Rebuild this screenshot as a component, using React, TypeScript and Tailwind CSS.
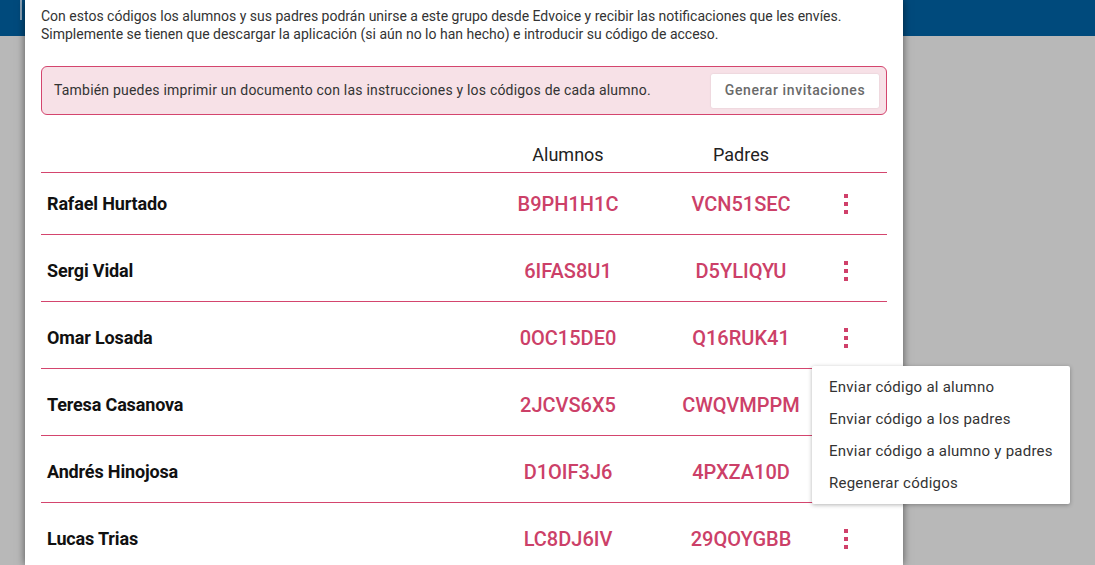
const students = [
  { name: "Rafael Hurtado", alumno: "B9PH1H1C", padres: "VCN51SEC" },
  { name: "Sergi Vidal", alumno: "6IFAS8U1", padres: "D5YLIQYU" },
  { name: "Omar Losada", alumno: "0OC15DE0", padres: "Q16RUK41" },
  { name: "Teresa Casanova", alumno: "2JCVS6X5", padres: "CWQVMPPM" },
  { name: "Andrés Hinojosa", alumno: "D1OIF3J6", padres: "4PXZA10D" },
  { name: "Lucas Trias", alumno: "LC8DJ6IV", padres: "29QOYGBB" },
];

const menuItems = [
  "Enviar código al alumno",
  "Enviar código a los padres",
  "Enviar código a alumno y padres",
  "Regenerar códigos",
];

function Dots() {
  return (
    <div className="flex flex-col items-center gap-[4px]">
      <span className="block w-[4px] h-[4px] bg-[#d0406a]" />
      <span className="block w-[4px] h-[4px] bg-[#d0406a]" />
      <span className="block w-[4px] h-[4px] bg-[#d0406a]" />
    </div>
  );
}

export default function App() {
  return (
    <div
      className="relative w-[1095px] h-[565px] overflow-hidden bg-[#b8b8b8] flex"
      style={{ fontFamily: "Roboto, 'Liberation Sans', sans-serif" }}
    >
      {/* left strip */}
      <div className="w-[25px] flex-shrink-0 flex flex-col">
        <div className="h-[36px] bg-[#004a7c]">
          <div className="ml-[20px] w-[2px] h-[20px] bg-[#8ea6ba]" />
        </div>
        <div className="flex-1 bg-[#b8b8b8]" />
      </div>

      {/* modal panel */}
      <div className="relative z-10 w-[878px] flex-shrink-0 bg-white shadow-[0_0_8px_rgba(0,0,0,0.55)] px-[16px] pt-[7px]">
        <p className="text-[14px] leading-[18px] text-[#333]">
          Con estos códigos los alumnos y sus padres podrán unirse a este grupo desde Edvoice y recibir las notificaciones que les envíes.
          <br />
          Simplemente se tienen que descargar la aplicación (si aún no lo han hecho) e introducir su código de acceso.
        </p>

        <div className="mt-[23px] h-[49px] flex items-center justify-between rounded-[6px] border border-[#d4456e] bg-[#f7e1e7] pl-[12px] pr-[7px]">
          <span className="text-[14px] tracking-[0.2px] text-[#333]">
            También puedes imprimir un documento con las instrucciones y los códigos de cada alumno.
          </span>
          <button className="h-[34px] w-[168px] bg-white rounded-[2px] shadow-[0_0_2px_rgba(0,0,0,0.12)] text-[14px] tracking-[0.6px] font-medium text-[#6a6a6a]">
            Generar invitaciones
          </button>
        </div>

        {/* table */}
        <div>
          <div className="grid grid-cols-[439px_176px_170px_40px_1fr] h-[58px] items-end pb-[7px] border-b border-[#d4456e] text-[18px] leading-[20px] text-[#222]">
            <div />
            <div className="text-center">Alumnos</div>
            <div className="text-center">Padres</div>
            <div />
            <div />
          </div>
          {students.map((s, i) => (
            <div
              key={s.name}
              className={`grid grid-cols-[439px_176px_170px_40px_1fr] items-center border-b border-[#d4456e] ${
                i === 0 ? "h-[62px]" : "h-[67px] pt-[5px]"
              }`}
            >
              <div className="pl-[6px] text-[18px] tracking-[-0.15px] font-bold text-[#111]">{s.name}</div>
              <div className="text-center text-[20px] font-medium text-[#cc4068]">{s.alumno}</div>
              <div className="text-center text-[20px] font-medium text-[#cc4068]">{s.padres}</div>
              <div className="flex justify-center">
                <Dots />
              </div>
              <div />
            </div>
          ))}
        </div>
      </div>

      {/* right strip */}
      <div className="flex-1 flex flex-col">
        <div className="h-[36px] bg-[#004a7c]" />
        <div className="flex-1 bg-[#b8b8b8]" />
      </div>

      {/* dropdown menu */}
      <div className="absolute z-20 left-[812px] top-[366px] w-[258px] bg-white rounded-[2px] shadow-[0_1px_4px_rgba(0,0,0,0.3)] py-[5px]">
        {menuItems.map((m) => (
          <div key={m} className="h-[32px] flex items-center px-[17px] text-[15px] tracking-[0.25px] text-[#333]">
            {m}
          </div>
        ))}
      </div>
    </div>
  );
}
